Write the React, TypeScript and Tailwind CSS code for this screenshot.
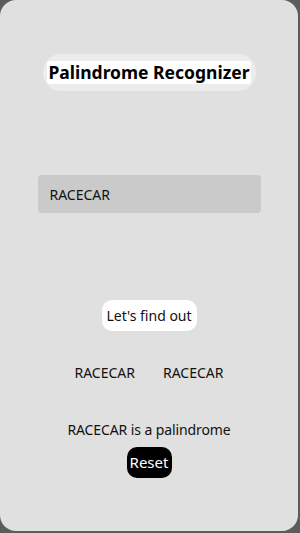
import React from "react";

export default function App() {
  return (
    <div className="w-[300px] h-[533px] bg-[#5c5c5c]" style={{ fontFamily: '"Noto Sans", "Open Sans", sans-serif' }}>
      <div className="w-[298px] h-[531px] bg-[#e0e0e0] rounded-[16px] flex flex-col items-center">
        <div className="mt-[54px] h-[37px] w-[213px] bg-[#ececec] rounded-[18px] flex items-center justify-center">
          <h1 className="bg-white h-[23px] px-[1px] rounded-[3px] text-[17.5px] leading-[23px] font-bold text-black">
            Palindrome Recognizer
          </h1>
        </div>
        <div className="mt-[84px] w-[223px] h-[38px] bg-[#cacaca] rounded-[4px] flex items-center px-[12px] text-[14px] text-[#111]">
          RACECAR
        </div>
        <button className="mt-[87px] w-[95px] h-[31px] bg-white rounded-[10px] text-[14px] text-[#111] flex items-center justify-center">
          Let's find out
        </button>
        <div className="mt-[32px] flex gap-[28px] text-[14px] text-[#111] leading-[20px]">
          <span>RACECAR</span>
          <span>RACECAR</span>
        </div>
        <div className="mt-[37px] text-[14px] text-[#111] leading-[20px] tracking-[-0.1px]">RACECAR is a palindrome</div>
        <button className="mt-[7px] w-[45px] h-[31px] bg-black rounded-[10px] text-[15px] text-white flex items-center justify-center">
          Reset
        </button>
      </div>
    </div>
  );
}
